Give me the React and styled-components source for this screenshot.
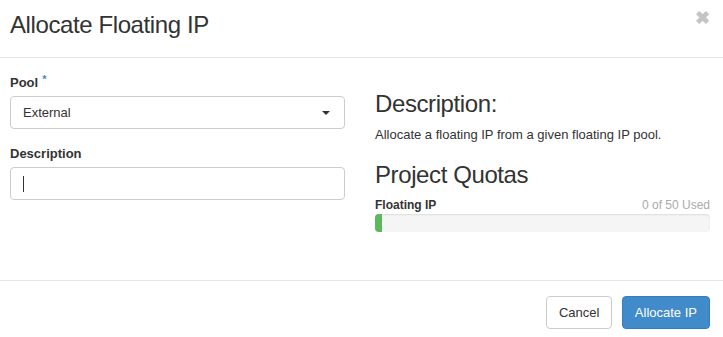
import styled, { createGlobalStyle } from "styled-components";

const GlobalStyle = createGlobalStyle`
  html, body {
    margin: 0;
    padding: 0;
    background: #fff;
  }
  body {
    font-family: "Liberation Sans", Arial, sans-serif;
    font-size: 13px;
    color: #333;
  }
  * { box-sizing: border-box; }
`;

const App = () => {
  return (
    <>
      <GlobalStyle />
      <Modal>
        <Header>
          <Title>Allocate Floating IP</Title>
          <Close aria-label="Close">✖</Close>
        </Header>
        <Body>
          <Column>
            <Field>
              <Label>
                Pool<Required>*</Required>
              </Label>
              <Select>
                <span>External</span>
                <Caret />
              </Select>
            </Field>
            <Field>
              <Label>Description</Label>
              <Input>
                <Cursor />
              </Input>
            </Field>
          </Column>
          <Column $right>
            <Heading>Description:</Heading>
            <Text>Allocate a floating IP from a given floating IP pool.</Text>
            <Heading>Project Quotas</Heading>
            <QuotaRow>
              <QuotaName>Floating IP</QuotaName>
              <QuotaUsed>0 of 50 Used</QuotaUsed>
            </QuotaRow>
            <Progress>
              <Bar style={{ width: "2%" }} />
            </Progress>
          </Column>
        </Body>
        <Footer>
          <Button>Cancel</Button>
          <Button $primary>Allocate IP</Button>
        </Footer>
      </Modal>
    </>
  );
};

const Modal = styled.div`
  width: 723px;
  height: 337px;
  display: flex;
  flex-direction: column;
`;

const Header = styled.div`
  height: 58px;
  border-bottom: 1px solid #e5e5e5;
  display: flex;
  justify-content: space-between;
  align-items: flex-start;
  padding: 0 13px 0 10px;
`;

const Title = styled.h4`
  margin: 10px 0 0;
  font-size: 24px;
  font-weight: 400;
  line-height: 30px;
  letter-spacing: -0.4px;
  color: #333;
`;

const Close = styled.span`
  margin-top: 7px;
  font-size: 18px;
  font-weight: bold;
  color: #c4c4c4;
  line-height: 22px;
`;

const Body = styled.div`
  height: 223px;
  border-bottom: 1px solid #e5e5e5;
  padding: 16px 13px 0 10px;
  display: grid;
  grid-template-columns: 335px 335px;
  column-gap: 30px;
`;

const Column = styled.div`
  display: flex;
  flex-direction: column;
  padding-top: ${(p) => (p.$right ? "10px" : "0")};
`;

const Field = styled.div`
  margin-bottom: 16px;
`;

const Label = styled.div`
  font-weight: bold;
  font-size: 13px;
  line-height: 18px;
  margin-bottom: 4px;
  color: #333;
`;

const Required = styled.span`
  color: #428bca;
  font-size: 11px;
  vertical-align: top;
  margin-left: 4px;
  line-height: 10px;
`;

const Select = styled.div`
  height: 33px;
  border: 1px solid #ccc;
  border-radius: 4px;
  display: flex;
  align-items: center;
  justify-content: space-between;
  padding: 0 14px 0 12px;
  font-size: 13px;
  color: #333;
`;

const Caret = styled.span`
  width: 0;
  height: 0;
  border-left: 4px solid transparent;
  border-right: 4px solid transparent;
  border-top: 4px solid #333;
`;

const Input = styled.div`
  height: 33px;
  border: 1px solid #ccc;
  border-radius: 4px;
  display: flex;
  align-items: center;
  padding: 0 12px;
`;

const Cursor = styled.span`
  width: 1px;
  height: 16px;
  background: #333;
`;

const Heading = styled.h3`
  margin: 6px 0 8px;
  font-size: 24px;
  font-weight: 400;
  line-height: 28px;
  letter-spacing: -0.4px;
  color: #333;
`;

const Text = styled.p`
  margin: 0 0 11px;
  font-size: 13px;
  line-height: 18px;
`;

const QuotaRow = styled.div`
  display: flex;
  justify-content: space-between;
  font-size: 12px;
  line-height: 16px;
`;

const QuotaName = styled.span`
  font-weight: bold;
  color: #333;
`;

const QuotaUsed = styled.span`
  color: #aaa;
`;

const Progress = styled.div`
  height: 18px;
  margin-top: 1px;
  background: #f5f5f5;
  border-radius: 4px;
  box-shadow: inset 0 1px 2px rgba(0, 0, 0, 0.1);
  overflow: hidden;
`;

const Bar = styled.div`
  height: 100%;
  background: #5cb85c;
`;

const Footer = styled.div`
  display: flex;
  justify-content: flex-end;
  gap: 10px;
  padding: 15px 13px 0 0;
`;

const Button = styled.button`
  height: 33px;
  padding: 0 ${(p) => (p.$primary ? "12px" : "11.5px")};
  font-family: "Liberation Sans", Arial, sans-serif;
  font-size: 13px;
  border-radius: 4px;
  border: 1px solid ${(p) => (p.$primary ? "#357ebd" : "#ccc")};
  background: ${(p) => (p.$primary ? "#428bca" : "#fff")};
  color: ${(p) => (p.$primary ? "#fff" : "#333")};
  cursor: pointer;
`;

export default App;
